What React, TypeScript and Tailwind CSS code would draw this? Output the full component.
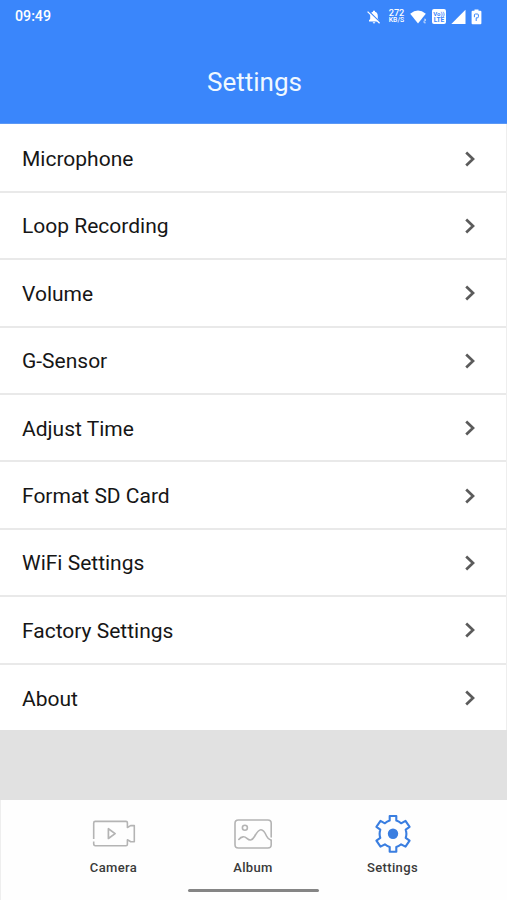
import type { ReactNode } from 'react';

const ITEMS = [
  'Microphone',
  'Loop Recording',
  'Volume',
  'G-Sensor',
  'Adjust Time',
  'Format SD Card',
  'WiFi Settings',
  'Factory Settings',
  'About',
];

function StatusBar() {
  return (
    <div className="flex h-[33px] items-center justify-between pl-[15px] pr-[25px] text-white">
      <span className="text-[14.2px] font-medium leading-none">09:49</span>
      <div className="flex items-center">
        <svg className="mr-[6px] h-[16px] w-[16px]" viewBox="0 0 16 16">
          <path d="M3 12.6V11.2L4.2 10V7Q4.2 3.5 7 2.8V2Q8 .9 9 2V2.8Q11.8 3.5 11.8 7V10L13 11.2V12.6Z" fill="currentColor" />
          <path d="M6.6 13.2h2.8Q8 15.6 6.6 13.2Z" fill="currentColor" />
          <path d="M2.6 2 14 13.2" stroke="#3a86fb" strokeWidth="1.3" />
          <path d="M1.6 2.6 13.6 14.3" stroke="currentColor" strokeWidth="1.3" />
        </svg>
        <div className="flex w-[17px] flex-col items-center font-medium">
          <span className="text-[9.2px] leading-[8px]">272</span>
          <span className="text-[6.8px] leading-[7px]">KB/S</span>
        </div>
        <svg className="ml-[5px] h-[16px] w-[18px]" viewBox="0 0 18 16">
          <path d="M.2 4.8Q8 -1.6 15.8 4.8L8 14.5Z" fill="currentColor" />
          <path d="M14 10.2h1.5v1.6H14v2h1.8" stroke="currentColor" strokeWidth=".9" fill="none" opacity=".7" />
        </svg>
        <div className="ml-[4px] flex h-[15px] w-[14px] flex-col items-center justify-center rounded-[2px] bg-white font-bold text-[#3a86fb]">
          <span className="text-[6px] leading-[7px]">Vo))</span>
          <span className="text-[6.6px] leading-[7px]">LTE</span>
        </div>
        <svg className="ml-[5px] h-[16px] w-[16px]" viewBox="0 0 16 16">
          <path d="M.3 15.1 14.5 .8v14.3Z" fill="currentColor" />
        </svg>
        <svg className="ml-[4px] h-[16px] w-[11px]" viewBox="0 0 11 16">
          <path d="M1.6 1.8H3.5V.4h4v1.4h1.9q1 0 1 1v11.4q0 1-1 1H1.6q-1 0-1-1V2.8q0-1 1-1Z" fill="currentColor" />
          <path d="M3.4 8.2V6q0-1 1-1h2q1 0 1 1v1.8q0 1-1 1H5.2V12" stroke="#3a86fb" strokeWidth="1" fill="none" />
        </svg>
      </div>
    </div>
  );
}

function Row({ label }: { label: string }) {
  return (
    <li className="flex h-[67.4px] shrink-0 items-center justify-between border-b-2 border-[#e9e9e9] pl-[22px] pr-[30px] last:h-[66px] last:border-b-0">
      <span className="pt-[3px] text-[21px] leading-none text-[#161616]">{label}</span>
      <svg className="mt-[1px] h-[18px] w-[12px]" viewBox="0 0 12 18">
        <path d="M2.2 2.6 9 9 2.2 15.4" fill="none" stroke="#5b5b5b" strokeWidth="2.7" />
      </svg>
    </li>
  );
}

function Tab({ label, children }: { label: string; children: ReactNode }) {
  return (
    <button className="flex w-[139.5px] flex-col items-center">
      {children}
      <span className="mt-[6px] text-[13px] font-medium leading-[16px] tracking-[0.36px] text-[#3a3a3a]">{label}</span>
    </button>
  );
}

export default function App() {
  return (
    <div className="flex h-[900px] w-[507px] flex-col overflow-hidden bg-[#e1e1e1] font-['Roboto',sans-serif]">
      <header className="h-[124px] shrink-0 border-b border-[#5b98f5] bg-[#3a86fb]">
        <StatusBar />
        <h1 className="pl-[2px] pt-[33px] text-center text-[26px] leading-[32px] text-[#f0f8ff]">Settings</h1>
      </header>
      <ul className="flex h-[606px] shrink-0 flex-col border-r border-[#eeeeee] bg-white pt-[1.4px]">
        {ITEMS.map((label) => (
          <Row key={label} label={label} />
        ))}
      </ul>
      <nav className="mt-[70px] flex h-[100px] shrink-0 flex-col items-center border-l border-[#eeeeee] bg-[#fefefe] pr-[2px]">
        <div className="flex pt-[14px]">
          <Tab label="Camera">
            <svg className="h-[40px] w-[44px]" viewBox="0 0 44 40">
              <g fill="none" stroke="#b4b4b4" strokeWidth="1.6" strokeLinejoin="round">
                <path d="M1.7 25V9q0-1.6 1.6-1.6H34q1.4 0 1.4 1.4v4.7l3.2-1.9h3.7v16.1h-3.5l-3.4-1.9v4.5q0 1.4-1.4 1.4H3.3q-1.6 0-1.6-1.6V27.5" />
                <path d="M16.4 14.7v9.8l6.7-4.9Z" strokeWidth="1.7" />
              </g>
            </svg>
          </Tab>
          <Tab label="Album">
            <svg className="h-[40px] w-[44px]" viewBox="0 0 44 40">
              <g fill="none" stroke="#b4b4b4" strokeWidth="1.6" strokeLinecap="round">
                <path d="M40.2 23V9.3Q40.2 6 36.9 6H7.3Q4 6 4 9.3v21.4Q4 34 7.3 34h29.6q3.3 0 3.3-3.3V26.4" />
                <circle cx="13.9" cy="13.8" r="2.5" />
                <path d="M7.8 25.5C10.6 22 13.6 22.3 15.9 24.3S20.8 27.3 23.5 22.5 28 15.5 30 15.7s4.3 3.5 5.5 6.3 2.5 3.6 4.7 4.2" />
              </g>
            </svg>
          </Tab>
          <Tab label="Settings">
            <svg className="h-[40px] w-[44px]" viewBox="0 0 44 40">
              <path
                d="M18.7 2h6.6v4.6q2.7.8 4.8 2.7l4.4-2.4 4.1 6-3.9 2.7q.7 2 .7 4.2t-.7 4.1l3.9 2.8-4.1 6-4.4-2.4q-2.1 1.8-4.8 2.6V37.8h-6.6v-4.9q-2.7-.8-4.8-2.6l-4.4 2.4-4.1-6 3.9-2.8q-.7-1.9-.7-4.1t.7-4.2l-3.9-2.7 4.1-6 4.4 2.4Q16 7.4 18.7 6.6Z"
                fill="none" stroke="#3a7ee0" strokeWidth="2.1" strokeLinejoin="round"
              />
              <circle cx="22" cy="19.8" r="5.2" fill="#3a7ee0" />
            </svg>
          </Tab>
        </div>
        <div className="mt-[13px] h-[3px] w-[131px] rounded-full bg-[#858585]" />
      </nav>
    </div>
  );
}
